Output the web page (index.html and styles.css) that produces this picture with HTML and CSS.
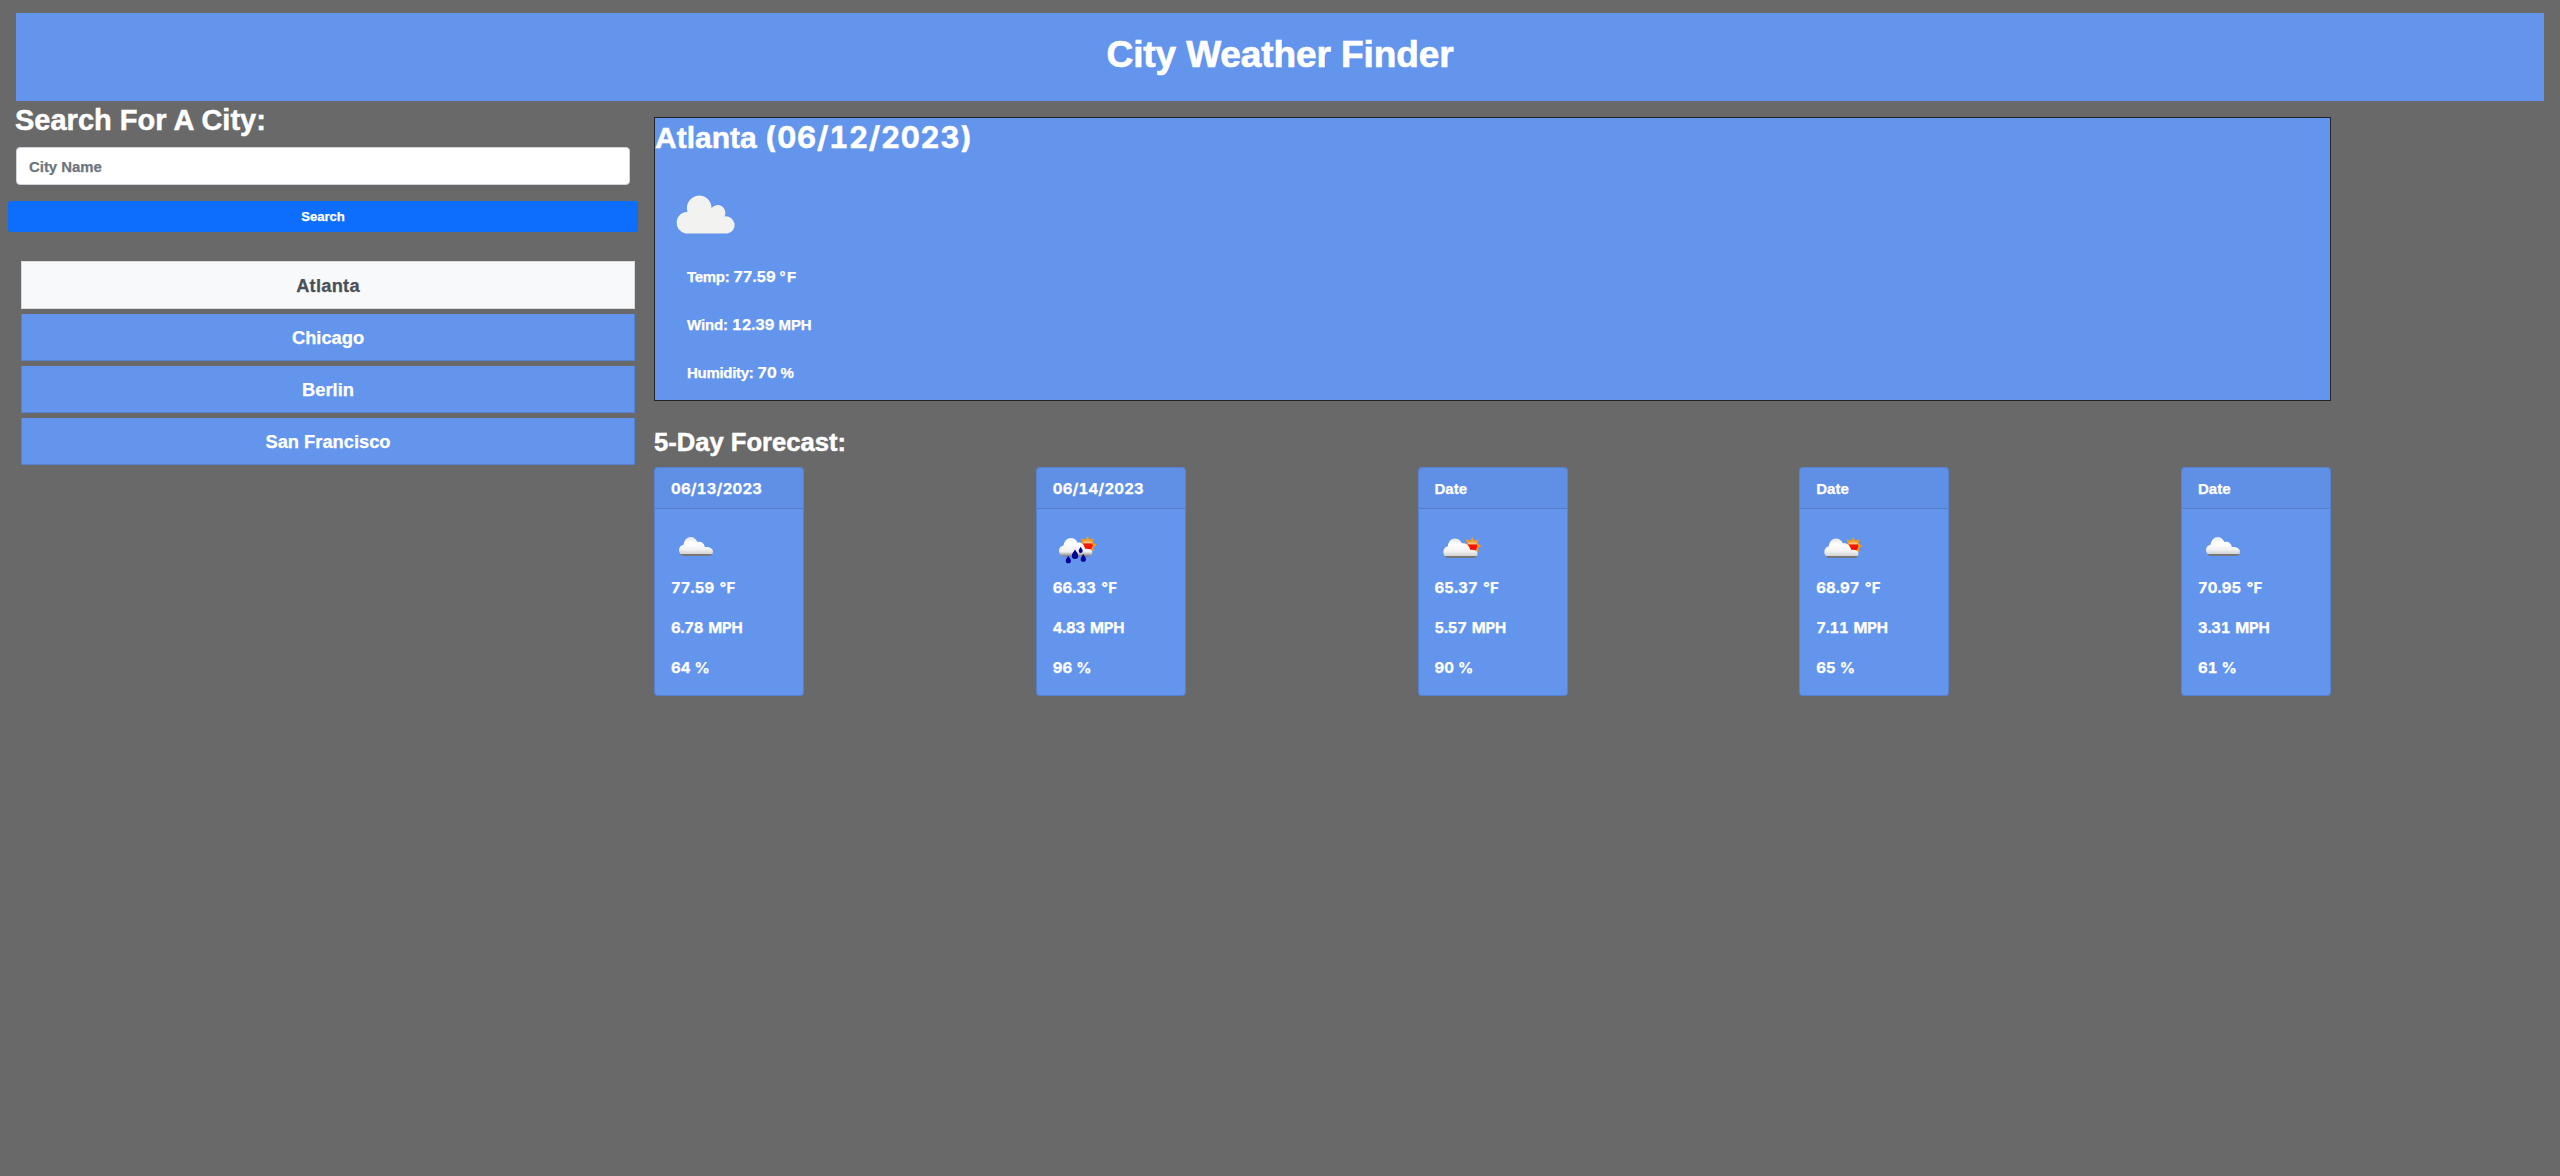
FILE: index.html
```html
<!DOCTYPE html>
<html lang="en">
<head>
<meta charset="utf-8">
<title>City Weather Finder</title>
<link rel="stylesheet" href="styles.css">
</head>
<body>
<svg class="defs" aria-hidden="true">
  <defs>
    <linearGradient id="cloudFill" x1="0" y1="0" x2="0" y2="1">
      <stop offset="0" stop-color="#e4e4e4"/><stop offset=".3" stop-color="#fff"/><stop offset=".65" stop-color="#f2f2f2"/><stop offset=".88" stop-color="#d4d4d4"/><stop offset=".92" stop-color="#777"/><stop offset="1" stop-color="#777"/>
    </linearGradient>
    <linearGradient id="rainFill" x1="0" y1="0" x2="0" y2="1">
      <stop offset="0" stop-color="#f2f2f2"/><stop offset=".3" stop-color="#fff"/><stop offset=".75" stop-color="#eee"/><stop offset="1" stop-color="#777"/>
    </linearGradient>
    <linearGradient id="sunFill" x1="0" y1="0" x2="0" y2="1">
      <stop offset="0" stop-color="#f0a030"/><stop offset=".25" stop-color="#fbc080"/><stop offset=".42" stop-color="#f02000"/><stop offset="1" stop-color="#f00"/>
    </linearGradient>
    <symbol id="sun" viewBox="-10 -10 20 20">
      <path fill="#f09a20" d="M0-9.300 1.800-5.500 6-6.500 5.400-2.200 9.400 0 5.400 2 6.500 6 2.300 5.400 0 9 -2.300 5.400-6.500 6-5.400 2-9.400 0-5.400-2.200-6.500-6.500-1.800-5.500z"/>
      <circle r="5" fill="url(#sunFill)"/>
    </symbol>
    <symbol id="clouds" viewBox="0 0 50 50">
      <path fill="url(#cloudFill)" d="M12 31C9.500 30 8 27.500 8 25c0-2.700 1.800-4.700 4.500-5.300C13.500 15 16 12 19.500 12c3.300 0 5.800 2 6.800 5 3.700-1 7 1.200 7.500 5 4.200-.6 8.200 1.200 8.200 4.500 0 2-1.200 3.500-3 4.500z"/>
    </symbol>
    <symbol id="partly" viewBox="0 0 50 50">
      <use href="#sun" x="27.300" y="11" width="20" height="20"/>
      <path fill="url(#cloudFill)" d="M12 33C9.800 32 8.300 29.500 8.300 27c0-3 1.700-5 4.500-5.700C13.500 16.500 16 13.500 19.800 13.500c3.200 0 5.900 1.700 7 4.800 4-.6 7.500 2 8.500 6.600 4-.3 7.200.8 7.200 3.600 0 2-1 3.500-2.500 4.500z"/>
    </symbol>
    <symbol id="rain" viewBox="0 0 50 50">
      <use href="#sun" x="24.700" y="10" width="20" height="20"/>
      <path fill="url(#rainFill)" d="M10 31.500C7.500 30.500 6 28.500 6 26c0-3 1.700-5 4.500-5.500C11.300 16 14 13 17.800 13c3.200 0 5.700 1.700 6.800 4.800 3.700-1 6.700 1.500 7.400 6 4-.2 7.300.7 7.300 3.700 0 2-.8 3.300-2.300 4z"/>
      <g fill="#00009c">
        <path d="M22 24.500c1.500 2.500 3.200 4.300 3.200 6.300a3.200 3.300 0 0 1-6.400 0c0-2 1.700-3.800 3.200-6.300z"/>
        <path d="M15.300 30.700c1.200 2 2.600 3.300 2.600 5a2.600 2.600 0 0 1-5.200 0c0-1.700 1.400-3 2.600-5z"/>
        <path d="M30.300 29c1.200 2 2.600 3.500 2.600 5.200a2.600 2.600 0 0 1-5.200 0c0-1.700 1.400-3.200 2.600-5.200z"/>
        <path d="M27.700 21.700c.9 1.600 2 2.800 2 4.200a2 2 0 0 1-4 0c0-1.400 1.100-2.600 2-4.200z"/>
      </g>
    </symbol>
  </defs>
</svg>
<header class="banner"><h1>City Weather Finder</h1></header>
<main class="layout">
  <aside class="sidebar">
    <h2>Search For A City:</h2>
    <input class="city-input" type="text" placeholder="City Name">
    <button class="search-btn">Search</button>
    <ul class="cities">
      <li class="active">Atlanta</li>
      <li>Chicago</li>
      <li>Berlin</li>
      <li>San Francisco</li>
    </ul>
  </aside>
  <section class="content">
    <article class="today">
      <h2>Atlanta <span class="today-date">(06/12/2023)</span></h2>
      <svg class="today-icon" viewBox="0 0 100 100"><path fill="#f2f2f0" d="M31.500 67.500A11 11 0 0 1 33.500 45.700A12.300 12.300 0 1 1 57.500 42A7.800 7.800 0 0 1 70.500 50.500A8.600 8.600 0 0 1 73.500 67.500z"/></svg>
      <p class="temp">Temp: <span class="num">77.59</span> <span class="unit">°F</span></p>
      <p class="wind">Wind: <span class="num">12.39</span> MPH</p>
      <p class="humidity">Humidity: <span class="num">70</span> %</p>
    </article>
    <h3>5-Day Forecast:</h3>
    <div class="forecast">
      <article class="day"><header class="date">06/13/2023</header><div class="body"><svg class="icon"><use href="#clouds"/></svg><p class="deg">77.59 °F</p><p class="mph">6.78 MPH</p><p>64 %</p></div></article>
      <article class="day"><header class="date">06/14/2023</header><div class="body"><svg class="icon"><use href="#rain"/></svg><p class="deg">66.33 °F</p><p class="mph">4.83 MPH</p><p>96 %</p></div></article>
      <article class="day"><header>Date</header><div class="body"><svg class="icon"><use href="#partly"/></svg><p class="deg">65.37 °F</p><p class="mph">5.57 MPH</p><p>90 %</p></div></article>
      <article class="day"><header>Date</header><div class="body"><svg class="icon"><use href="#partly"/></svg><p class="deg">68.97 °F</p><p class="mph">7.11 MPH</p><p>65 %</p></div></article>
      <article class="day"><header>Date</header><div class="body"><svg class="icon"><use href="#clouds"/></svg><p class="deg">70.95 °F</p><p class="mph">3.31 MPH</p><p>61 %</p></div></article>
    </div>
  </section>
</main>
</body>
</html>
```
FILE: styles.css
```css
* { box-sizing: border-box; }
body {
  margin: 0;
  padding: 13px 16px 0;
  background: dimgray;
  color: #fff;
  font: bold 15px/24px "Liberation Sans", Arial, sans-serif;
  -webkit-text-stroke: .25px currentColor;
}
h1, h2, h3, p, ul { margin: 0; padding: 0; }
.defs { display: block; width: 0; height: 0; }
.banner { height: 88px; padding-top: 18px; background: cornflowerblue; text-align: center; }
h1 { font-size: 37px; line-height: 48px; letter-spacing: -0.1px; -webkit-text-stroke-width: .7px; }
h2, h3 { -webkit-text-stroke-width: .5px; }
.layout { display: flex; gap: 24px; align-items: flex-start; }
.sidebar { width: 614px; flex: none; }
.sidebar h2 { font-size: 29px; line-height: 38px; margin-bottom: 8px; margin-left: -1px; }
.city-input {
  display: block;
  width: 100%;
  height: 38px;
  padding: 1px 12px 0;
  border: 1px solid #ced4da;
  border-radius: 4px;
  background: #fff;
  font: bold 14.9px "Liberation Sans", Arial, sans-serif;
}
.city-input::placeholder { color: #6c757d; opacity: 1; }
.search-btn {
  display: block;
  width: 630px;
  height: 31px;
  margin: 16px 0 29px -8px;
  padding: 0;
  border: 0;
  border-radius: 3px;
  background: #0d6efd;
  color: #fff;
  font: bold 13.1px/31px "Liberation Sans", Arial, sans-serif;
}
.cities { display: grid; gap: 5px; margin-left: 5px; width: 614px; list-style: none; }
.cities li {
  height: 47px;
  border: 1px solid rgba(0, 0, 0, .125);
  border-top: 0;
  background: cornflowerblue;
  font-size: 18.3px;
  line-height: 47px;
  text-align: center;
}
.cities .active {
  height: 48px;
  border-top: 1px solid #d9dadb;
  border-color: #d9dadb;
  background: #f8f9fa;
  color: #495057;
  letter-spacing: .25px;
}
.content { width: 1677px; flex: none; padding-top: 16px; }
.today { height: 284px; border: 1px solid #212529; background: cornflowerblue; }
.today h2 { height: 39px; font-size: 30px; line-height: 38px; white-space: nowrap; }
.today-date { font-family: Inter, sans-serif; font-size: 29.500px; font-variant-numeric: tabular-nums; letter-spacing: .75px; }
.today-icon { display: block; width: 100px; height: 100px; margin: 9px 0 -1px -1px; }
.today p { height: 24px; margin: 0 0 24px 32px; }
.num { font-family: Inter, sans-serif; font-variant-numeric: tabular-nums; letter-spacing: -.1px; }
.today .temp { letter-spacing: -.3px; }
.unit { letter-spacing: 1.500px; }
.today .wind { letter-spacing: -.1px; }
.today .humidity { letter-spacing: -.3px; }
h3 { margin: 24px 0 8px; font-size: 25.6px; line-height: 34px; }
.forecast { display: flex; justify-content: space-between; }
.day { width: 150px; height: 229px; border: 1px solid rgba(0, 0, 0, .125); border-radius: 4px; background: cornflowerblue; }
.day header { height: 41px; padding: 9px 16px 0; border-bottom: 1px solid rgba(0, 0, 0, .125); background: rgba(0, 0, 0, .03); }
.day .date { font-family: Inter, sans-serif; font-variant-numeric: tabular-nums; letter-spacing: .2px; }
.body { padding: 16px; }
.body p { margin-bottom: 16px; font-family: Inter, sans-serif; font-variant-numeric: tabular-nums; }
.icon { display: block; width: 50px; height: 50px; margin-bottom: 1px; }
.body .deg { letter-spacing: .1px; word-spacing: 1px; }
.body .mph { letter-spacing: -.2px; word-spacing: 1px; }
```
